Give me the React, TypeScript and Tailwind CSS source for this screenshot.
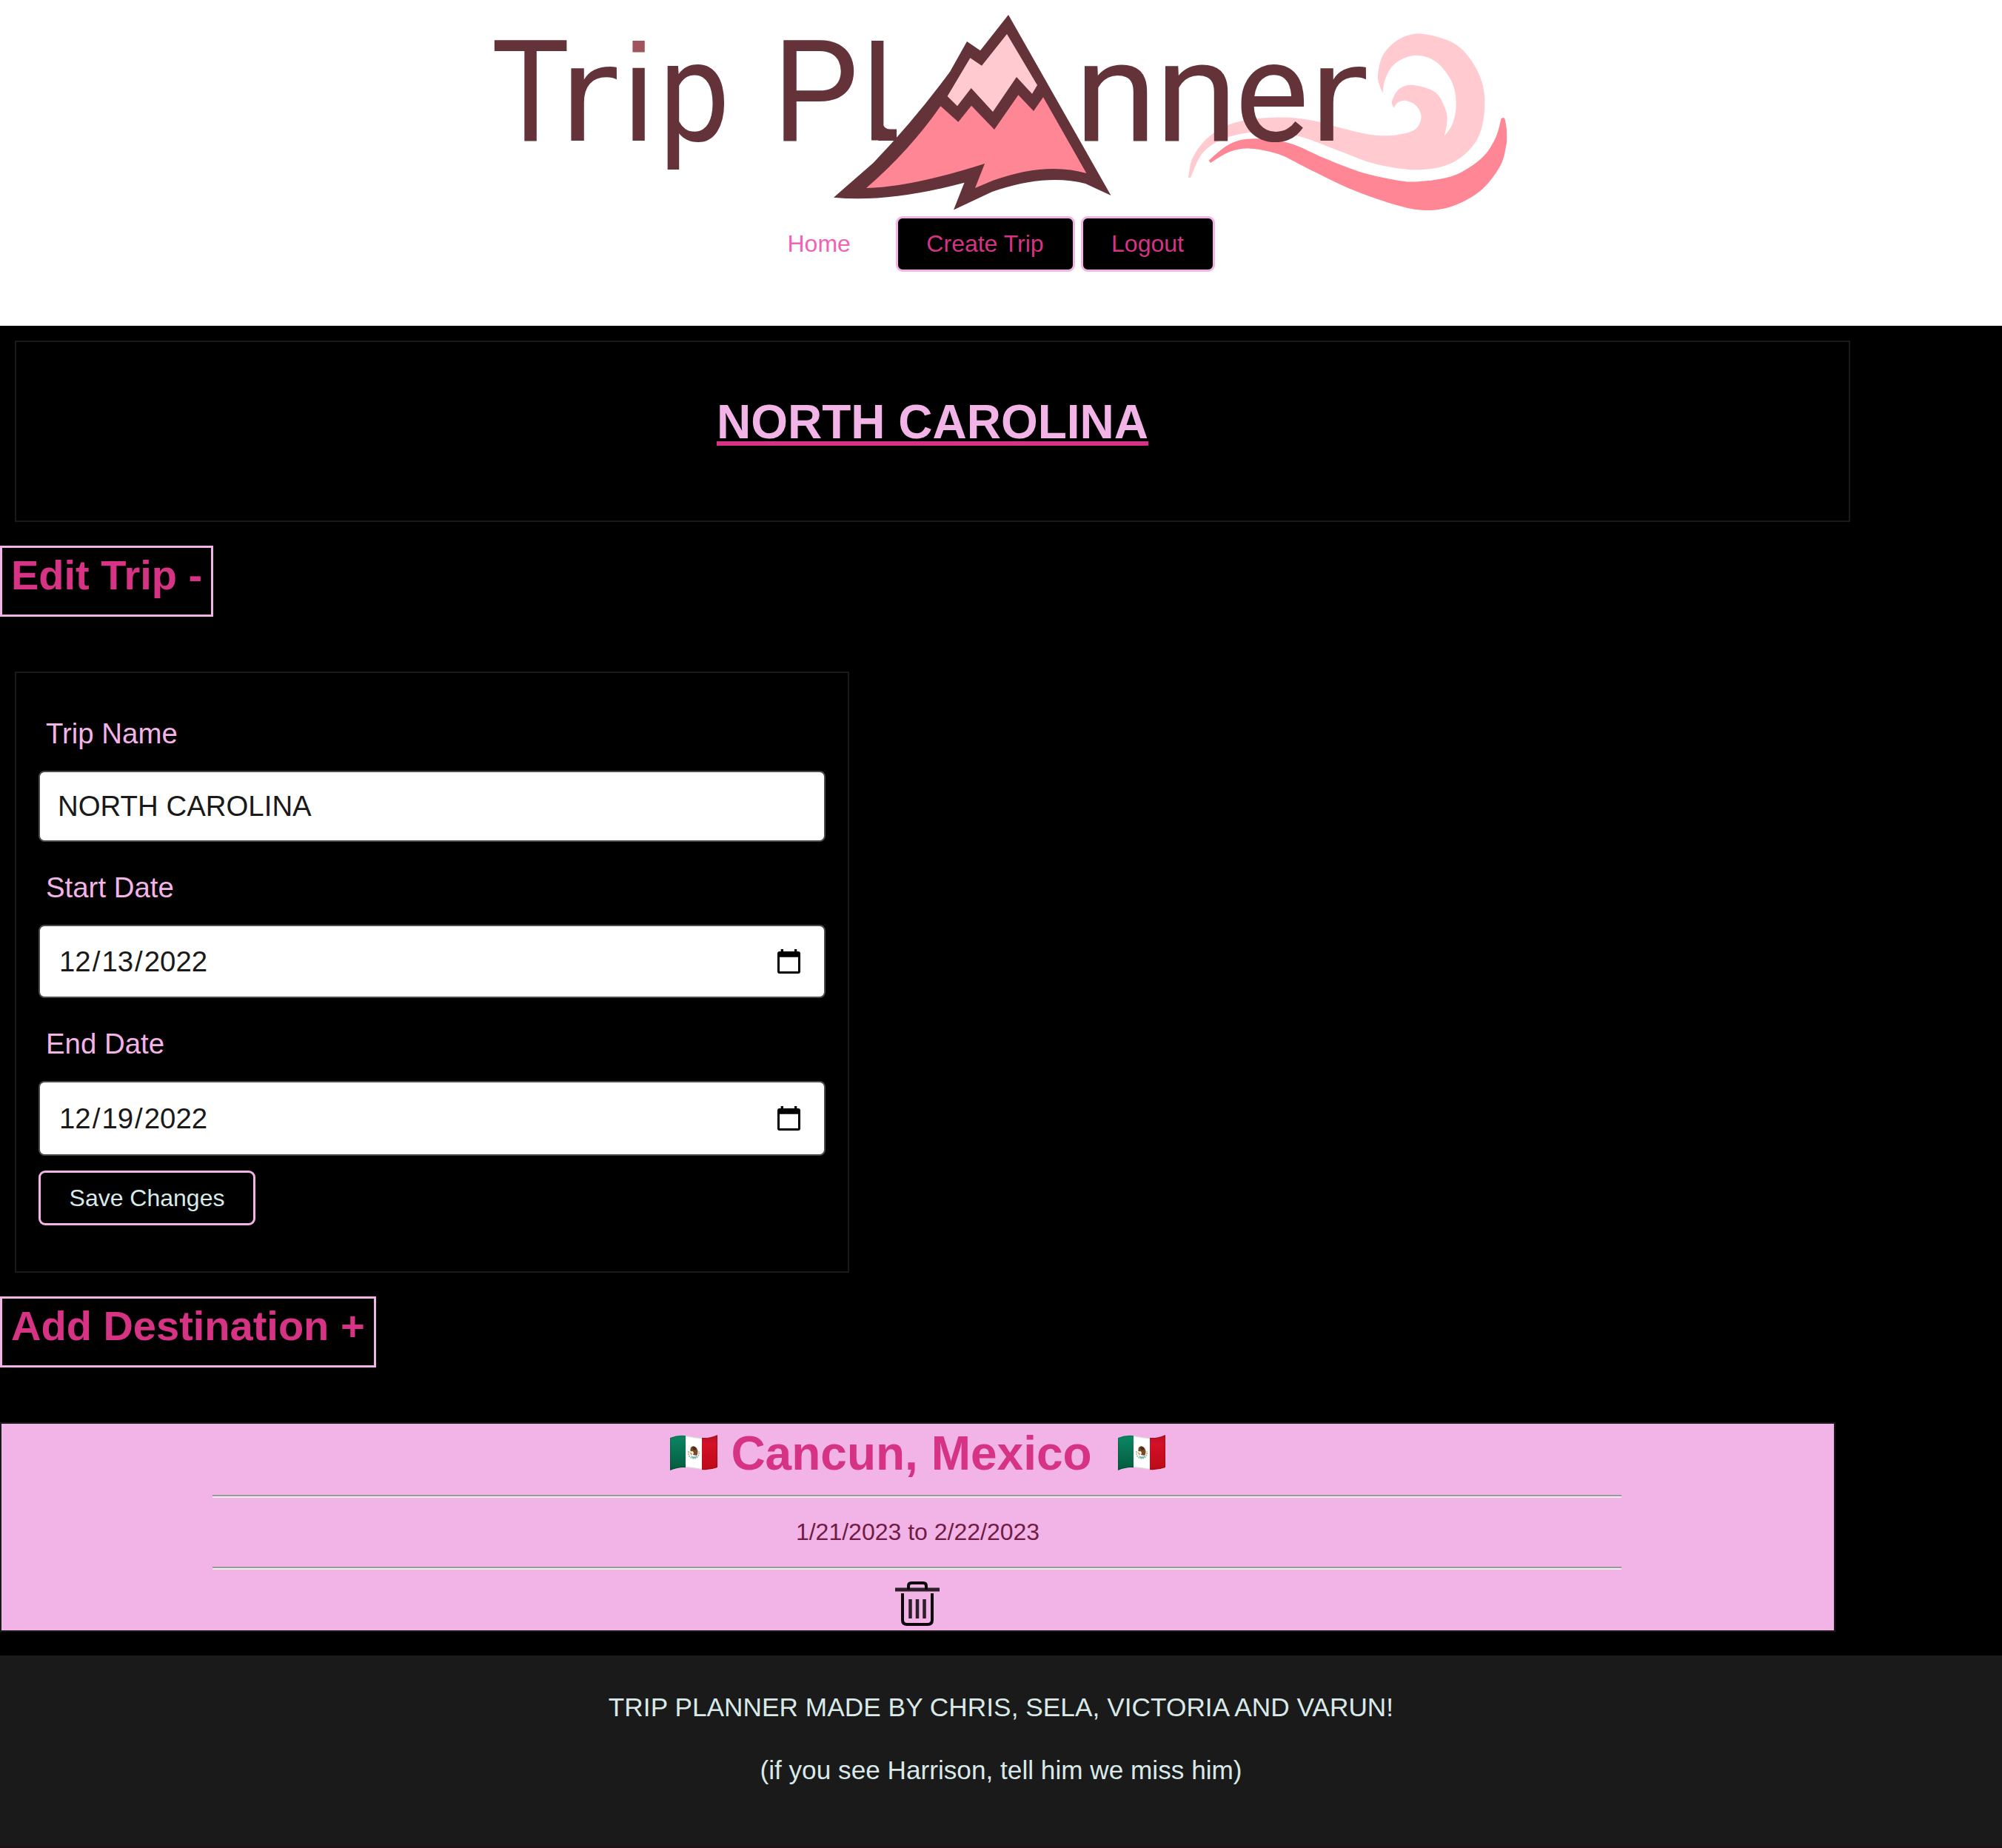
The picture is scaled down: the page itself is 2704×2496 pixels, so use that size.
import React from "react";

type Pt = [number, number];

/** Smooth curve through the given points (Catmull-Rom converted to cubic Béziers). */
function curve(pts: Pt[]): string {
  let d = "";
  for (let i = 0; i < pts.length - 1; i++) {
    const p0 = pts[i - 1] ?? pts[i];
    const p1 = pts[i];
    const p2 = pts[i + 1];
    const p3 = pts[i + 2] ?? p2;
    const c1x = p1[0] + (p2[0] - p0[0]) / 6;
    const c1y = p1[1] + (p2[1] - p0[1]) / 6;
    const c2x = p2[0] - (p3[0] - p1[0]) / 6;
    const c2y = p2[1] - (p3[1] - p1[1]) / 6;
    d += `C${c1x.toFixed(1)} ${c1y.toFixed(1)} ${c2x.toFixed(1)} ${c2y.toFixed(1)} ${p2[0]} ${p2[1]}`;
  }
  return d;
}

/** Closed shape made of smooth runs that meet at sharp corners. */
function shape(runs: Pt[][]): string {
  const [x, y] = runs[0][0];
  return `M${x} ${y}` + runs.map(curve).join("") + "Z";
}

const waveLight = shape([
  [[1605, 240], [1611, 213], [1632.6, 185], [1670, 165], [1727, 158.6], [1774, 163], [1812, 173], [1850, 181.7], [1882.7, 182.7], [1911, 175], [1919.5, 158], [1913, 143], [1899, 136], [1888, 138.5], [1882.7, 145.7]],
  [[1882.7, 145.7], [1880, 136.7], [1890, 120], [1908.7, 115], [1939, 125], [1953, 150], [1954, 168], [1950.7, 184]],
  [[1950.7, 184], [1962, 166.7], [1966.7, 140], [1960.6, 110], [1939, 83], [1911, 74.7], [1884, 86], [1871, 106.7], [1867.6, 125.7]],
  [[1867.6, 125.7], [1861, 104], [1868.6, 73.3], [1892, 51.7], [1922.8, 46], [1967.7, 61], [1996, 96.7], [2005.4, 138], [1996, 186.7], [1963, 219], [1915.7, 229.3], [1859, 221.7], [1812, 205], [1764.7, 187], [1730, 180], [1689, 179], [1651.5, 188], [1624, 207], [1608, 240]],
]);

const waveDark = shape([
  [[1632.6, 216.7], [1661, 194.5], [1694, 187.3], [1741, 193.3], [1788, 213.3], [1835.5, 231.7], [1882.7, 242.7], [1915.7, 245.3], [1963, 237.3], [2000.7, 214], [2019.6, 187], [2027.6, 160]],
  [[2027.6, 160], [2032, 160], [2035, 175], [2035, 193]],
  [[2035, 193], [2026.7, 223.3], [2000.7, 256.7], [1963, 278], [1925, 284], [1882.7, 276], [1821, 254], [1764.7, 226.7], [1727, 208.3], [1689, 200.7], [1661, 205], [1635, 220]],
]);

type Glyph = { ch: string; x: number; font: string; size: number; len: number; fill?: string };

const glyphs: Glyph[] = [
  { ch: "T", x: 663.5, font: "Roboto", size: 191, len: 106 },
  { ch: "r", x: 754, font: "DejaVu Sans", size: 179, len: 79 },
  { ch: "i", x: 842, font: "Liberation Sans", size: 186, len: 41.3, fill: "url(#dot)" },
  { ch: "p", x: 890, font: "Roboto", size: 191, len: 96 },
  { ch: "P", x: 1043, font: "Roboto", size: 191, len: 117 },
  { ch: "l", x: 1164.5, font: "Liberation Sans", size: 186, len: 41.3 },
  { ch: "n", x: 1451, font: "Roboto", size: 191, len: 112 },
  { ch: "n", x: 1560, font: "Roboto", size: 191, len: 112 },
  { ch: "e", x: 1668, font: "Roboto", size: 191, len: 100 },
  { ch: "r", x: 1766, font: "DejaVu Sans", size: 179, len: 79 },
];

function Logo() {
  return (
    <svg className="block h-[264px] w-[1366px] overflow-visible" viewBox="669 20 1366 264">
      <defs>
        <linearGradient id="dot" gradientUnits="userSpaceOnUse" x1="0" y1="40" x2="0" y2="200">
          <stop offset="0.24" stopColor="#a0545c" />
          <stop offset="0.24" stopColor="#633339" />
        </linearGradient>
      </defs>
      <path d={waveLight} fill="#ffcbd0" />
      <path d={waveDark} fill="#ff8694" />
      <path
        fill="#633339"
        d="M1362 20L1500.5 264L1466 248Q1412 234 1340 259L1288 283.5L1302.500 246.7Q1200 274 1126 266.7L1179.5 220Q1235 162 1283 97L1306 56L1324 68.3Z"
      />
      <path
        fill="#ffcbd0"
        d="M1360 46L1401 115L1394 126.7L1373 104L1341 151L1311.7 119L1293 143.3L1279.6 130L1310.4 78.3L1326 88.7Z"
      />
      <path
        fill="#ff8694"
        d="M1270.4 143.3L1294.3 164.7L1312 142.7L1343 175L1375.4 128.3L1396 150L1409 131.3L1467.4 234Q1412 218 1340 244.3L1317 254L1330 221Q1230 253 1170 254Q1228 204 1270.4 143.3Z"
      />
      <path d="M1192 166Q1194 174.500 1202 174.500H1211V190H1186Z" fill="#633339" />
      <text y="190" fill="#633339">
        {glyphs.map((g, i) => (
          <tspan
            key={i}
            x={g.x}
            fontFamily={g.font}
            fontSize={g.size}
            textLength={g.len}
            lengthAdjust="spacingAndGlyphs"
            fill={g.fill}
          >
            {g.ch}
          </tspan>
        ))}
      </text>
    </svg>
  );
}

function CalendarIcon() {
  return (
    <svg className="h-[33px] w-[31px]" viewBox="0 0 31 33" fill="#000">
      <path
        fillRule="evenodd"
        d="M4.7 0H8V3H23V0H26.3V3H28a3 3 0 0 1 3 3V30a3 3 0 0 1-3 3H3a3 3 0 0 1-3-3V6a3 3 0 0 1 3-3H4.7ZM3 10.700V30H28V10.700Z"
      />
    </svg>
  );
}

function TrashIcon() {
  return (
    <svg className="block h-[60px] w-[60px]" viewBox="0 0 60 60" fill="none" stroke="#0d080c" strokeWidth="4">
      <path d="M0 11H60" strokeWidth="5" stroke="#2b1f29" />
      <path d="M18 11V6Q18 2 22 2H38Q42 2 42 6V11" />
      <path d="M10 16V52Q10 58 16 58H44Q50 58 50 52V16" />
      <path d="M20.500 24V50M30 24V50M39.500 24V50" strokeWidth="4.500" stroke="#2b1f29" />
    </svg>
  );
}

function MexicoFlag() {
  return (
    <svg className="-mt-[3px] h-[48px] w-[64px] shrink-0" viewBox="0 0 64 48">
      <defs>
        <linearGradient id="fg" x1="0" y1="0" x2="0" y2="1">
          <stop offset="0" stopColor="#0b8766" />
          <stop offset="1" stopColor="#035c3c" />
        </linearGradient>
        <linearGradient id="fr" x1="0" y1="0" x2="0" y2="1">
          <stop offset="0" stopColor="#b5122a" />
          <stop offset="0.25" stopColor="#d31027" />
          <stop offset="1" stopColor="#bd0a17" />
        </linearGradient>
        <clipPath id="fc">
          <path d="M0 4Q10 0 20 1C34 2 46 8 64 0V44Q54 48 43 47C30 46 18 40 0 48Z" />
        </clipPath>
      </defs>
      <g clipPath="url(#fc)">
        <path fill="#fff" d="M0 0H64V48H0Z" />
        <path fill="url(#fg)" d="M0 0H21V48H0Z" />
        <path fill="url(#fr)" d="M43 0H64V48H43Z" />
        <path fill="none" stroke="#000" strokeOpacity="0.15" strokeWidth="2.500" d="M0 4Q10 0 20 1C34 2 46 8 64 0V44Q54 48 43 47C30 46 18 40 0 48Z" />
      </g>
      <path d="M25 22Q24 31 32 32Q40 31 39 22" fill="none" stroke="#a9b48a" strokeWidth="1.600" strokeDasharray="2 1" />
      <path d="M28 17Q32 13 36 18Q39 23 36 28L31 27Q33 23 30 22Q26 24 28 17Z" fill="#7a4a22" />
      <path d="M30 16Q34 15 36 19L33 21Q30 20 30 16Z" fill="#4d2f1a" />
      <path d="M26 23L30 25L29 28Z" fill="#c99a4b" />
      <path d="M28 28Q32 31 37 28L36 30Q32 33 29 30Z" fill="#4fb3c4" />
    </svg>
  );
}

function DateField({ parts, height }: { parts: [string, string, string]; height: string }) {
  return (
    <div
      className={`mt-[27px] flex items-center justify-between rounded-[8px] border-2 border-[#4a4a4a] bg-white pr-[32px] pl-[26px] text-[38.4px] text-[#1a1a1a] ${height}`}
    >
      <span className="whitespace-nowrap">
        {parts[0]}
        <span className="mx-[2px]">/</span>
        {parts[1]}
        <span className="mx-[2px]">/</span>
        {parts[2]}
      </span>
      <CalendarIcon />
    </div>
  );
}

function FieldLabel({ children }: { children: React.ReactNode }) {
  return <label className="block pl-[10px] text-[38.4px] leading-[46px] text-[#f2b3e7]">{children}</label>;
}

const rule = "mr-[2px] h-[4px] w-[1903px] border-t-2 border-b-2 border-t-[#999999] border-b-[#eeeeee]";

export default function App() {
  return (
    <div className="flex min-h-[2496px] w-[2704px] flex-col bg-black font-['Liberation_Sans',Arial,sans-serif] text-[32px]">
      <header className="flex h-[440px] flex-col items-center bg-white pt-[20px]">
        <Logo />
        <nav className="mt-[8px] flex h-[75px] items-center">
          <a className="mr-[60px] w-[86px] pb-[2px] text-[#f062b4]">Home</a>
          <button className="mr-[8px] h-[75px] w-[242px] rounded-[9px] border-3 border-[#f2b3e7] bg-black pb-[2px] text-[#d63384]">
            Create Trip
          </button>
          <button className="h-[75px] w-[181px] rounded-[9px] border-3 border-[#f2b3e7] bg-black pb-[2px] text-[#d63384]">
            Logout
          </button>
        </nav>
      </header>

      <main className="flex h-[1796px] flex-col items-start">
        <section className="mt-[20px] ml-[20px] h-[245px] w-[2479px] border-2 border-[#1a1a1a] pt-[70px] text-center">
          <h1 className="text-[64px] leading-[76px] font-bold whitespace-nowrap text-[#f2b3e7] underline decoration-[#d63384] decoration-[6px] underline-offset-[4px]">
            NORTH CAROLINA
          </h1>
        </section>

        <h2 className="mt-[32px] h-[96px] w-[288px] border-3 border-[#f2b3e7] pt-[3px] pl-[12px] text-[56px] leading-[67px] font-bold whitespace-nowrap text-[#d63384]">
          Edit Trip -
        </h2>

        <form className="mt-[74px] ml-[20px] h-[812px] w-[1127px] border-2 border-[#1a1a1a] px-[30px] pt-[59px]">
          <FieldLabel>Trip Name</FieldLabel>
          <div className="mt-[27px] flex h-[96px] items-center rounded-[8px] border-2 border-[#4a4a4a] bg-white pl-[24px] text-[38.4px] text-[#1a1a1a]">
            NORTH CAROLINA
          </div>
          <div className="mt-[39px]">
            <FieldLabel>Start Date</FieldLabel>
            <DateField parts={["12", "13", "2022"]} height="h-[99px]" />
          </div>
          <div className="mt-[39px]">
            <FieldLabel>End Date</FieldLabel>
            <DateField parts={["12", "19", "2022"]} height="h-[101px]" />
          </div>
          <button
            type="button"
            className="mt-[20px] h-[74px] w-[293px] rounded-[9px] border-3 border-[#f2b3e7] bg-black text-[#d9e9e8]"
          >
            Save Changes
          </button>
        </form>

        <h2 className="mt-[32px] h-[96px] w-[508px] border-3 border-[#f2b3e7] pt-[3px] pl-[12px] text-[56px] leading-[67px] font-bold whitespace-nowrap text-[#d63384]">
          Add Destination +
        </h2>

        <section className="mt-[74px] flex h-[283px] w-[2479px] flex-col items-center border-2 border-[#1a1a1a] bg-[#f2b3e7]">
          <div className="mt-[2px] flex h-[77px] items-center">
            <MexicoFlag />
            <h3 className="mr-[35px] ml-[18px] text-[64px] leading-[77px] font-bold whitespace-nowrap text-[#d63384]">
              Cancun, Mexico
            </h3>
            <MexicoFlag />
          </div>
          <div className={`mt-[17px] ${rule}`} />
          <p className="mt-[27px] leading-[38px] text-[#701c45]">1/21/2023 to 2/22/2023</p>
          <div className={`mt-[28px] ${rule}`} />
          <button className="mt-[16px] mr-[2px]">
            <TrashIcon />
          </button>
        </section>
      </main>

      <footer className="flex h-[260px] flex-col items-center border-b-3 border-[#1d1418] bg-[#1a1a1a] pt-[49px] text-[35.2px] leading-[42px] text-[#d9e9e8]">
        <p className="tracking-[0.06px]">TRIP PLANNER MADE BY CHRIS, SELA, VICTORIA AND VARUN!</p>
        <p className="mt-[43px]">(if you see Harrison, tell him we miss him)</p>
      </footer>
    </div>
  );
}
